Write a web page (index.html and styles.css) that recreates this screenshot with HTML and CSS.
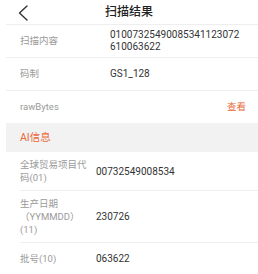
FILE: index.html
```html
<!DOCTYPE html>
<html lang="zh-CN">
<head>
<meta charset="utf-8">
<link rel="stylesheet" href="styles.css">
</head>
<body>
<div class="page">
  <header class="header">
    <svg class="back" width="12" height="16" viewBox="0 0 12 16"><polyline points="10,1 2.5,8 10,15" fill="none" stroke="#333" stroke-width="1.4" stroke-linecap="round" stroke-linejoin="round"/></svg>
    <div class="title">扫描结果</div>
  </header>
  <div class="row">
    <div class="label">扫描内容</div>
    <div class="value wrap">01007325490085341123072610063622</div>
  </div>
  <div class="row">
    <div class="label">码制</div>
    <div class="value">GS1_128</div>
  </div>
  <div class="row last">
    <div class="label">rawBytes</div>
    <div class="link">查看</div>
  </div>
  <div class="section">AI信息</div>
  <div class="ai-row">
    <div class="ai-label">全球贸易项目代码(01)</div>
    <div class="ai-value">00732549008534</div>
  </div>
  <div class="ai-row">
    <div class="ai-label">生产日期（YYMMDD）(11)</div>
    <div class="ai-value">230726</div>
  </div>
  <div class="ai-row">
    <div class="ai-label">批号(10)</div>
    <div class="ai-value">063622</div>
  </div>
</div>
</body>
</html>
```
FILE: styles.css
```css
html, body {
  margin: 0;
  padding: 0;
  background: #fff;
}
body {
  font-family: Roboto, "Noto Sans CJK SC", sans-serif;
  width: 258px;
  overflow: hidden;
}
.page {
  margin-left: 6px;
}
.header {
  height: 24px;
  border-bottom: 1px solid #eeeeee;
  display: flex;
  align-items: center;
  position: relative;
}
.back {
  margin-left: 11px;
  margin-top: 1px;
}
.title {
  position: absolute;
  left: 0;
  right: 6px;
  top: 0;
  line-height: 25px;
  text-align: center;
  font-size: 12px;
  font-weight: 500;
  color: #222;
}
.row {
  display: flex;
  align-items: center;
  min-height: 30px;
  padding: 1px 12px 1px 14px;
  border-bottom: 1px solid #eeeeee;
}
.row.last {
  border-bottom: none;
  height: 32px;
  padding-top: 0;
  padding-bottom: 0;
  align-items: stretch;
}
.row.last .label,
.row.last .link {
  line-height: 32px;
}
.label {
  width: 90px;
  flex: none;
  font-size: 9.5px;
  color: #9a9a9a;
  line-height: 12px;
}
.value {
  font-size: 10px;
  line-height: 12px;
  color: #333;
}
.wrap {
  width: 131px;
  word-break: break-all;
}
.link {
  margin-left: auto;
  font-size: 9.5px;
  line-height: 12px;
  color: #e8693a;
}
.section {
  background: #f2f2f2;
  height: 29px;
  line-height: 29px;
  padding-left: 14px;
  font-size: 10.5px;
  color: #e8693a;
}
.ai-row {
  margin-left: 14px;
  display: flex;
  align-items: center;
  min-height: 19px;
  padding: 6px 0;
  border-bottom: 1px solid #eeeeee;
}
.ai-label {
  width: 70px;
  flex: none;
  font-size: 9.5px;
  line-height: 13px;
  color: #9a9a9a;
}
.ai-value {
  margin-left: 6px;
  font-size: 10px;
  color: #333;
}
```
